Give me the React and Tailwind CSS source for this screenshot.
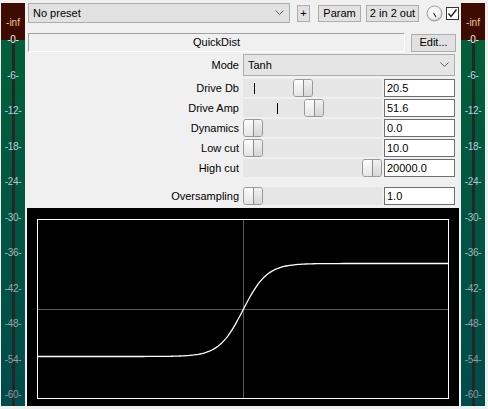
import React from 'react'

const scale = ['-0-', '-6-', '-12-', '-18-', '-24-', '-30-', '-36-', '-42-', '-48-', '-54-', '-60-']
const scaleColors = [
  'text-[#f4f0e8]', 'text-[#b4dce8]', 'text-[#b0d8e4]', 'text-[#acd3de]', 'text-[#a8ccd6]',
  'text-[#a3c3ca]', 'text-[#9dbabe]', 'text-[#97b0b1]', 'text-[#92a7a7]', 'text-[#8e9f9e]', 'text-[#8a9998]',
]

function Meter() {
  return (
    <div className="relative w-[24px] h-[403px] mt-[3px] shrink-0 flex flex-col">
      <div className="h-[37px] bg-[#3d0b02]" />
      <div className="flex-1 flex justify-center bg-linear-to-b from-[#025f38] to-[#014b4a]">
        <div className="w-[3px] bg-[#262626]" />
      </div>
      <span className="absolute left-0 right-0 top-[14px] text-center text-[10px] leading-[12px] text-[#f5c690]">-inf</span>
      {scale.map((s, i) => (
        <span key={s}
              className={`absolute left-0 right-0 text-center text-[10px] leading-[12px] tracking-[-0.3px] ${scaleColors[i]}`}
              style={{ top: 37 - 6 + i * 35.5 }}>
          {s}
        </span>
      ))}
    </div>
  )
}

function Chevron() {
  return (
    <svg width="9" height="6" viewBox="0 0 9 6">
      <polyline points="0.5,0.5 4.5,4.5 8.5,0.5" fill="none" stroke="#5a5a5a" strokeWidth="1" />
    </svg>
  )
}

function Thumb({ left }) {
  return (
    <div className="absolute top-0 w-[20px] h-[18px] rounded-[3px] border border-[#9a9a9a] flex overflow-hidden"
         style={{ left }}>
      <div className="flex-1 bg-linear-to-b from-[#fdfdfd] to-[#e4e4e4]" />
      <div className="w-px bg-[#8c8c8c]" />
      <div className="flex-1 bg-linear-to-b from-[#f2f2f2] to-[#d6d6d6]" />
    </div>
  )
}

function Row({ label, value, thumb, tick, className = '' }) {
  return (
    <div className={`flex items-center h-[20px] ${className}`}>
      <div className="w-[212px] text-right">{label}</div>
      <div className="relative ml-[4px] w-[139px] h-[18px] bg-[#e6e6e6]">
        {tick != null && (
          <div className="absolute top-[4px] w-px h-[11px] bg-black" style={{ left: tick }} />
        )}
        <Thumb left={thumb} />
      </div>
      <div className="ml-[2px] w-[71px] h-[18px] border border-[#6e6e6e] bg-white pl-[2px] leading-[16px]">
        {value}
      </div>
    </div>
  )
}

function Graph() {
  const pts = []
  for (let x = 0; x <= 410; x += 2) {
    const y = 90 - 46.5 * Math.tanh((x - 205) / 24)
    pts.push(`${x},${y.toFixed(2)}`)
  }
  return (
    <div className="mt-[2px] w-[432px] h-[198px] bg-black pl-[10px] pt-[11px]">
      <div className="w-[412px] h-[180px] border border-white">
        <svg width="410" height="178" viewBox="0 0 410 178" className="block">
          <line x1="205.5" y1="0" x2="205.5" y2="178" stroke="#5a5a5a" strokeWidth="1" />
          <line x1="0" y1="89.5" x2="410" y2="89.5" stroke="#5a5a5a" strokeWidth="1" />
          <polyline points={pts.join(' ')} fill="none" stroke="#ffffff" strokeWidth="1.3" />
        </svg>
      </div>
    </div>
  )
}

export default function App() {
  return (
    <div className="w-[488px] h-[409px] bg-[#f0f0f0] flex pl-[1px] gap-[2px] text-[11px] text-black font-['Liberation_Sans',Arial,sans-serif] overflow-hidden">
      <Meter />

      <div className="w-[432px] shrink-0 flex flex-col pt-[3px]">
        {/* preset bar */}
        <div className="flex items-center h-[20px]">
          <div className="ml-[1px] w-[262px] h-[20px] bg-[#e1e1e1] border border-[#adadad] flex items-center justify-between pl-[4px] pr-[5px]">
            <span>No preset</span>
            <Chevron />
          </div>
          <div className="ml-[7px] w-[13px] h-[17px] bg-[#e1e1e1] border border-[#adadad] flex items-center justify-center">+</div>
          <div className="ml-[8px] w-[43px] h-[17px] bg-[#e1e1e1] border border-[#adadad] flex items-center justify-center">Param</div>
          <div className="ml-[5px] w-[53px] h-[17px] bg-[#e1e1e1] border border-[#adadad] flex items-center justify-center">2 in 2 out</div>
          <svg width="17" height="17" viewBox="0 0 17 17" className="ml-[7px]">
            <defs>
              <radialGradient id="knob" cx="45%" cy="40%" r="60%">
                <stop offset="0%" stopColor="#ffffff" />
                <stop offset="70%" stopColor="#f0f0f0" />
                <stop offset="100%" stopColor="#b8b8b8" />
              </radialGradient>
            </defs>
            <circle cx="8.5" cy="8.5" r="7.5" fill="url(#knob)" stroke="#9a9a9a" strokeWidth="1" />
            <line x1="7.5" y1="8" x2="10" y2="12" stroke="#303030" strokeWidth="1.2" />
          </svg>
          <div className="ml-[3px] w-[13px] h-[13px] bg-white border border-[#333333] flex items-center justify-center">
            <svg width="11" height="11" viewBox="0 0 11 11">
              <polyline points="1.5,5.5 4,8.5 9.5,1.5" fill="none" stroke="#1a1a1a" strokeWidth="1.4" />
            </svg>
          </div>
        </div>

        {/* name row */}
        <div className="flex items-center mt-[10px] h-[19px]">
          <div className="ml-[1px] w-[377px] h-[19px] border-t border-l border-t-[#a0a0a0] border-l-[#a0a0a0] border-b border-r border-b-white border-r-white flex items-center justify-center">
            QuickDist
          </div>
          <div className="ml-[6px] w-[45px] h-[18px] bg-[#e1e1e1] border border-[#adadad] flex items-center justify-center">Edit...</div>
        </div>

        {/* mode */}
        <div className="flex items-center mt-[2px] h-[22px]">
          <div className="w-[212px] text-right">Mode</div>
          <div className="ml-[4px] w-[212px] h-[22px] bg-[#e5e5e5] border border-[#adadad] flex items-center justify-between pl-[4px] pr-[5px]">
            <span>Tanh</span>
            <Chevron />
          </div>
        </div>

        <Row className="mt-[2px]" label="Drive Db" value="20.5" thumb={50} tick={11} />
        <Row label="Drive Amp" value="51.6" thumb={61} tick={34} />
        <Row label="Dynamics" value="0.0" thumb={0} />
        <Row label="Low cut" value="10.0" thumb={0} />
        <Row label="High cut" value="20000.0" thumb={119} />
        <Row className="mt-[8px]" label="Oversampling" value="1.0" thumb={0} />

        <Graph />
      </div>

      <Meter />
    </div>
  )
}
